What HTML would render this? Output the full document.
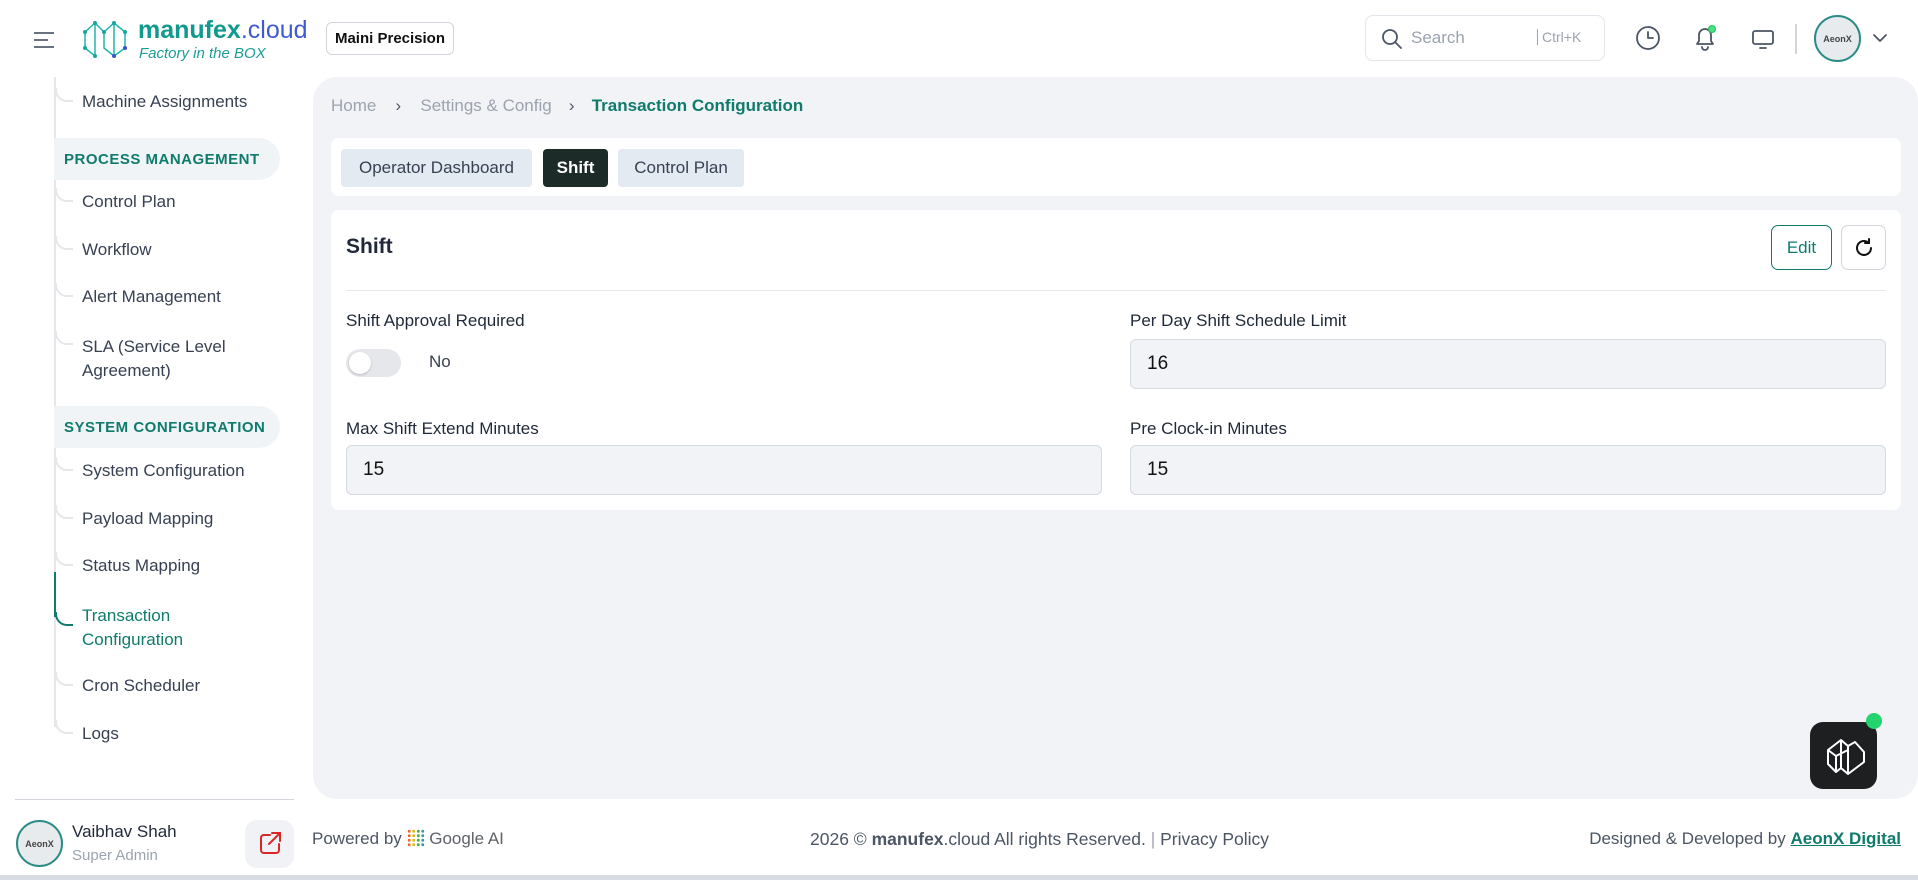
<!DOCTYPE html>
<html><head><meta charset="utf-8"><style>
*{box-sizing:border-box;margin:0;padding:0}
body{width:1918px;height:880px;overflow:hidden;background:#fff;font-family:"Liberation Sans",sans-serif;color:#1f2937;position:relative}
.a{position:absolute}
.side{font-size:17px;color:#374151}
.sec{background:#f1f4f7;border-radius:0 21px 21px 0;color:#0f7b6c;font-weight:bold;font-size:15px;letter-spacing:.5px;padding-left:10px;display:flex;align-items:center}
.tab{position:absolute;top:149px;height:38px;border-radius:4px;background:#e3eaf1;color:#374151;font-size:17px;display:flex;align-items:center;justify-content:center}
.lbl{font-size:17px;color:#1f2937}
.inp{position:absolute;height:50px;background:#f1f3f6;border:1px solid #d6dbe1;border-radius:6px;font-size:19px;padding-left:16px;display:flex;align-items:center;color:#111}
.ico{stroke:#4b5563;fill:none;stroke-width:1.8;stroke-linecap:round;stroke-linejoin:round}
.cn{position:absolute;left:55px;width:18px;height:14px;border-left:2px solid #e5e7eb;border-bottom:2px solid #e5e7eb;border-radius:0 0 0 12px}
</style></head><body>
<svg class="a" style="left:33px;top:31px" width="22" height="18"><path d="M1 2h20M1 9h14M1 16h20" stroke="#6b7280" stroke-width="2" fill="none"/></svg>
<svg class="a" style="left:82px;top:20px" width="50" height="38" viewBox="0 0 50 38"><g stroke="#22b5a8" stroke-width="1.5" fill="none"><path d="M3 12L13 3L22 12L32 3L43 12L43 28L32 36M3 12L3 28L13 36M13 3L13 36M22 12L22 28L32 36M32 3L32 36"/></g><g fill="#17a89a"><circle cx="3" cy="12" r="2"/><circle cx="13" cy="3" r="2"/><circle cx="22" cy="12" r="2"/><circle cx="32" cy="3" r="2"/><circle cx="43" cy="12" r="2"/><circle cx="3" cy="28" r="2"/><circle cx="13" cy="36" r="2"/></g><g fill="#3f51d0"><circle cx="32" cy="36" r="2"/><circle cx="43" cy="28" r="2"/></g></svg>
<div class="a" style="left:138px;top:16px;font-size:25px;line-height:28px"><span style="color:#12998f;font-weight:bold">manufex</span><span style="color:#3f5ad0">.cloud</span></div>
<div class="a" style="left:139px;top:45px;font-size:15px;font-style:italic;color:#1a9e96">Factory in the BOX</div>
<div class="a" style="left:326px;top:22px;width:128px;height:33px;border:1px solid #d1d5db;border-radius:6px;font-size:15px;font-weight:bold;color:#111;display:flex;align-items:center;justify-content:center">Maini Precision</div>
<div class="a" style="left:1365px;top:15px;width:240px;height:46px;border:1px solid #e2e5ea;border-radius:8px"></div>
<svg class="a" style="left:1381px;top:28px" width="22" height="22"><circle cx="9" cy="9" r="7" class="ico"/><path d="M14 14l6 6" class="ico"/></svg>
<div class="a" style="left:1411px;top:28px;font-size:17px;color:#9ca3af">Search</div>
<div class="a" style="left:1537px;top:29px;font-size:14px;color:#9ca3af;border-left:1.5px solid #9ca3af;padding-left:4px">Ctrl+K</div>
<svg class="a" style="left:1635px;top:25px" width="26" height="26"><circle cx="13" cy="13" r="11" class="ico"/><path d="M13 7v6h5" class="ico"/></svg>
<svg class="a" style="left:1691px;top:24px" width="28" height="28"><path d="M6 20h16l-2-3v-6a6 6 0 0 0-12 0v6z M11 23a3 3 0 0 0 6 0" class="ico"/><circle cx="21" cy="5" r="3.5" fill="#4ade80" stroke="#22c55e"/></svg>
<svg class="a" style="left:1750px;top:26px" width="26" height="26"><rect x="3" y="5" width="20" height="13" rx="2" class="ico"/><path d="M10 22h6" class="ico"/></svg>
<div class="a" style="left:1795px;top:24px;width:2px;height:30px;background:#d1d5db"></div>
<div class="a" style="left:1814px;top:15px;width:47px;height:47px;border-radius:50%;border:2.5px solid #2a8c87;background:#e8ebee;font-size:9px;font-weight:bold;color:#444;display:flex;align-items:center;justify-content:center">AeonX</div>
<svg class="a" style="left:1872px;top:32px" width="16" height="12"><path d="M2 3l6 6 6-6" class="ico" stroke="#6b7280"/></svg>
<div class="a" style="left:54px;top:77px;width:2px;height:650px;background:#e5e7eb"></div>
<div class="cn" style="top:88px"></div><div class="cn" style="top:188px"></div><div class="cn" style="top:236px"></div><div class="cn" style="top:283px"></div><div class="cn" style="top:331px"></div><div class="cn" style="top:457px"></div><div class="cn" style="top:505px"></div><div class="cn" style="top:552px"></div><div class="cn" style="top:612px;border-color:#0f7b6c"></div><div class="cn" style="top:672px"></div><div class="cn" style="top:720px"></div>
<div class="a" style="left:54px;top:572px;width:2px;height:45px;background:#0f7b6c"></div>
<div class="a sec" style="left:54px;top:138px;width:226px;height:42px">PROCESS MANAGEMENT</div>
<div class="a sec" style="left:54px;top:406px;width:226px;height:42px">SYSTEM CONFIGURATION</div>
<div class="side">
<div class="a" style="left:82px;top:92px">Machine Assignments</div>
<div class="a" style="left:82px;top:192px">Control Plan</div>
<div class="a" style="left:82px;top:240px">Workflow</div>
<div class="a" style="left:82px;top:287px">Alert Management</div>
<div class="a" style="left:82px;top:335px;line-height:24px">SLA (Service Level<br>Agreement)</div>
<div class="a" style="left:82px;top:461px">System Configuration</div>
<div class="a" style="left:82px;top:509px">Payload Mapping</div>
<div class="a" style="left:82px;top:556px">Status Mapping</div>
<div class="a" style="left:82px;top:604px;line-height:24px;color:#0f7b6c">Transaction<br>Configuration</div>
<div class="a" style="left:82px;top:676px">Cron Scheduler</div>
<div class="a" style="left:82px;top:724px">Logs</div>
</div>
<div class="a" style="left:15px;top:799px;width:279px;height:1px;background:#d1d5db"></div>
<div class="a" style="left:16px;top:820px;width:47px;height:47px;border-radius:50%;border:2.5px solid #2a8c87;background:#e8ebee;font-size:9px;font-weight:bold;color:#444;display:flex;align-items:center;justify-content:center">AeonX</div>
<div class="a" style="left:72px;top:822px;font-size:17px;color:#1f2937">Vaibhav Shah</div>
<div class="a" style="left:72px;top:847px;font-size:15px;color:#9ca3af">Super Admin</div>
<div class="a" style="left:245px;top:820px;width:49px;height:48px;border-radius:12px;background:#f0f2f5"></div>
<svg class="a" style="left:256px;top:830px" width="28" height="28"><path d="M14 5H8a3 3 0 0 0-3 3v12a3 3 0 0 0 3 3h12a3 3 0 0 0 3-3v-6M16 3h8v8M24 3L13 14" fill="none" stroke="#dc2626" stroke-width="2" stroke-linecap="round"/></svg>
<div class="a" style="left:313px;top:77px;width:1605px;height:722px;background:#f2f3f6;border-radius:24px"></div>
<div class="a" style="left:331px;top:96px;font-size:17px;color:#9ca3af;white-space:nowrap">Home<span style="color:#4b5563;display:inline-block;width:44px;text-align:center">&#8250;</span>Settings &amp; Config<span style="color:#4b5563;display:inline-block;width:40px;text-align:center">&#8250;</span><b style="color:#0f7b6c">Transaction Configuration</b></div>
<div class="a" style="left:331px;top:138px;width:1570px;height:58px;background:#fff;border-radius:8px"></div>
<div class="tab" style="left:341px;width:191px">Operator Dashboard</div>
<div class="tab" style="left:543px;width:65px;background:#1c2b28;color:#fff;font-weight:bold">Shift</div>
<div class="tab" style="left:618px;width:126px">Control Plan</div>
<div class="a" style="left:331px;top:210px;width:1570px;height:300px;background:#fff;border-radius:8px"></div>
<div class="a" style="left:346px;top:235px;font-size:21px;font-weight:bold;color:#1f2937">Shift</div>
<div class="a" style="left:1771px;top:225px;width:61px;height:45px;border:1.5px solid #0f7b6c;border-radius:7px;color:#0f7b6c;font-size:17px;display:flex;align-items:center;justify-content:center">Edit</div>
<div class="a" style="left:1841px;top:225px;width:45px;height:45px;border:1px solid #d1d5db;border-radius:7px"></div>
<svg class="a" style="left:1853px;top:237px" width="22" height="22"><path d="M18 11a7 7 0 1 1-2.5-5.4M16 2v4h-4" fill="none" stroke="#111" stroke-width="2" stroke-linecap="round"/></svg>
<div class="a" style="left:346px;top:290px;width:1540px;height:1px;background:#e5e7eb"></div>
<div class="a lbl" style="left:346px;top:311px">Shift Approval Required</div>
<div class="a" style="left:346px;top:349px;width:55px;height:28px;border-radius:14px;background:#e5e7eb"></div>
<div class="a" style="left:349px;top:352px;width:22px;height:22px;border-radius:50%;background:#fff;box-shadow:0 1px 2px rgba(0,0,0,.2)"></div>
<div class="a" style="left:429px;top:352px;font-size:17px;color:#374151">No</div>
<div class="a lbl" style="left:1130px;top:311px">Per Day Shift Schedule Limit</div>
<div class="inp" style="left:1130px;top:339px;width:756px">16</div>
<div class="a lbl" style="left:346px;top:419px">Max Shift Extend Minutes</div>
<div class="inp" style="left:346px;top:445px;width:756px">15</div>
<div class="a lbl" style="left:1130px;top:419px">Pre Clock-in Minutes</div>
<div class="inp" style="left:1130px;top:445px;width:756px">15</div>
<div class="a" style="left:1810px;top:722px;width:67px;height:67px;border-radius:13px;background:#1e1f21"></div>
<svg class="a" style="left:1822px;top:734px" width="44" height="44" viewBox="0 0 44 44"><path d="M6 16L19 6L26 12L33 8L42 18L42 28L26 40L19 34L14 38L6 30Z M19 6L19 34 M26 12L26 40 M6 16L14 22L14 38 M14 22L26 16" fill="none" stroke="#fff" stroke-width="2" stroke-linejoin="round"/></svg>
<div class="a" style="left:1866px;top:713px;width:16px;height:16px;border-radius:50%;background:#22d36e"></div>
<div class="a" style="left:312px;top:829px;font-size:17px;color:#4b5563">Powered by <span style="display:inline-block;width:18px;height:18px;vertical-align:-3px;background:linear-gradient(90deg,#ea4335,#fbbc05,#34a853,#4285f4);-webkit-mask:radial-gradient(circle,#000 45%,transparent 50%) 0 0/4.5px 4.5px"></span> <span style="color:#5f6368">Google AI</span></div>
<div class="a" style="left:810px;top:829px;font-size:17.5px;color:#4b5563">2026 © <b>manufex</b>.cloud All rights Reserved. <span style="color:#9ca3af">|</span> Privacy Policy</div>
<div class="a" style="right:17px;top:829px;font-size:17px;color:#4b5563">Designed &amp; Developed by <b style="color:#0f7b6c;text-decoration:underline">AeonX Digital</b></div>
<div class="a" style="left:0;top:875px;width:1918px;height:5px;background:#d7dde3"></div>
</body></html>
